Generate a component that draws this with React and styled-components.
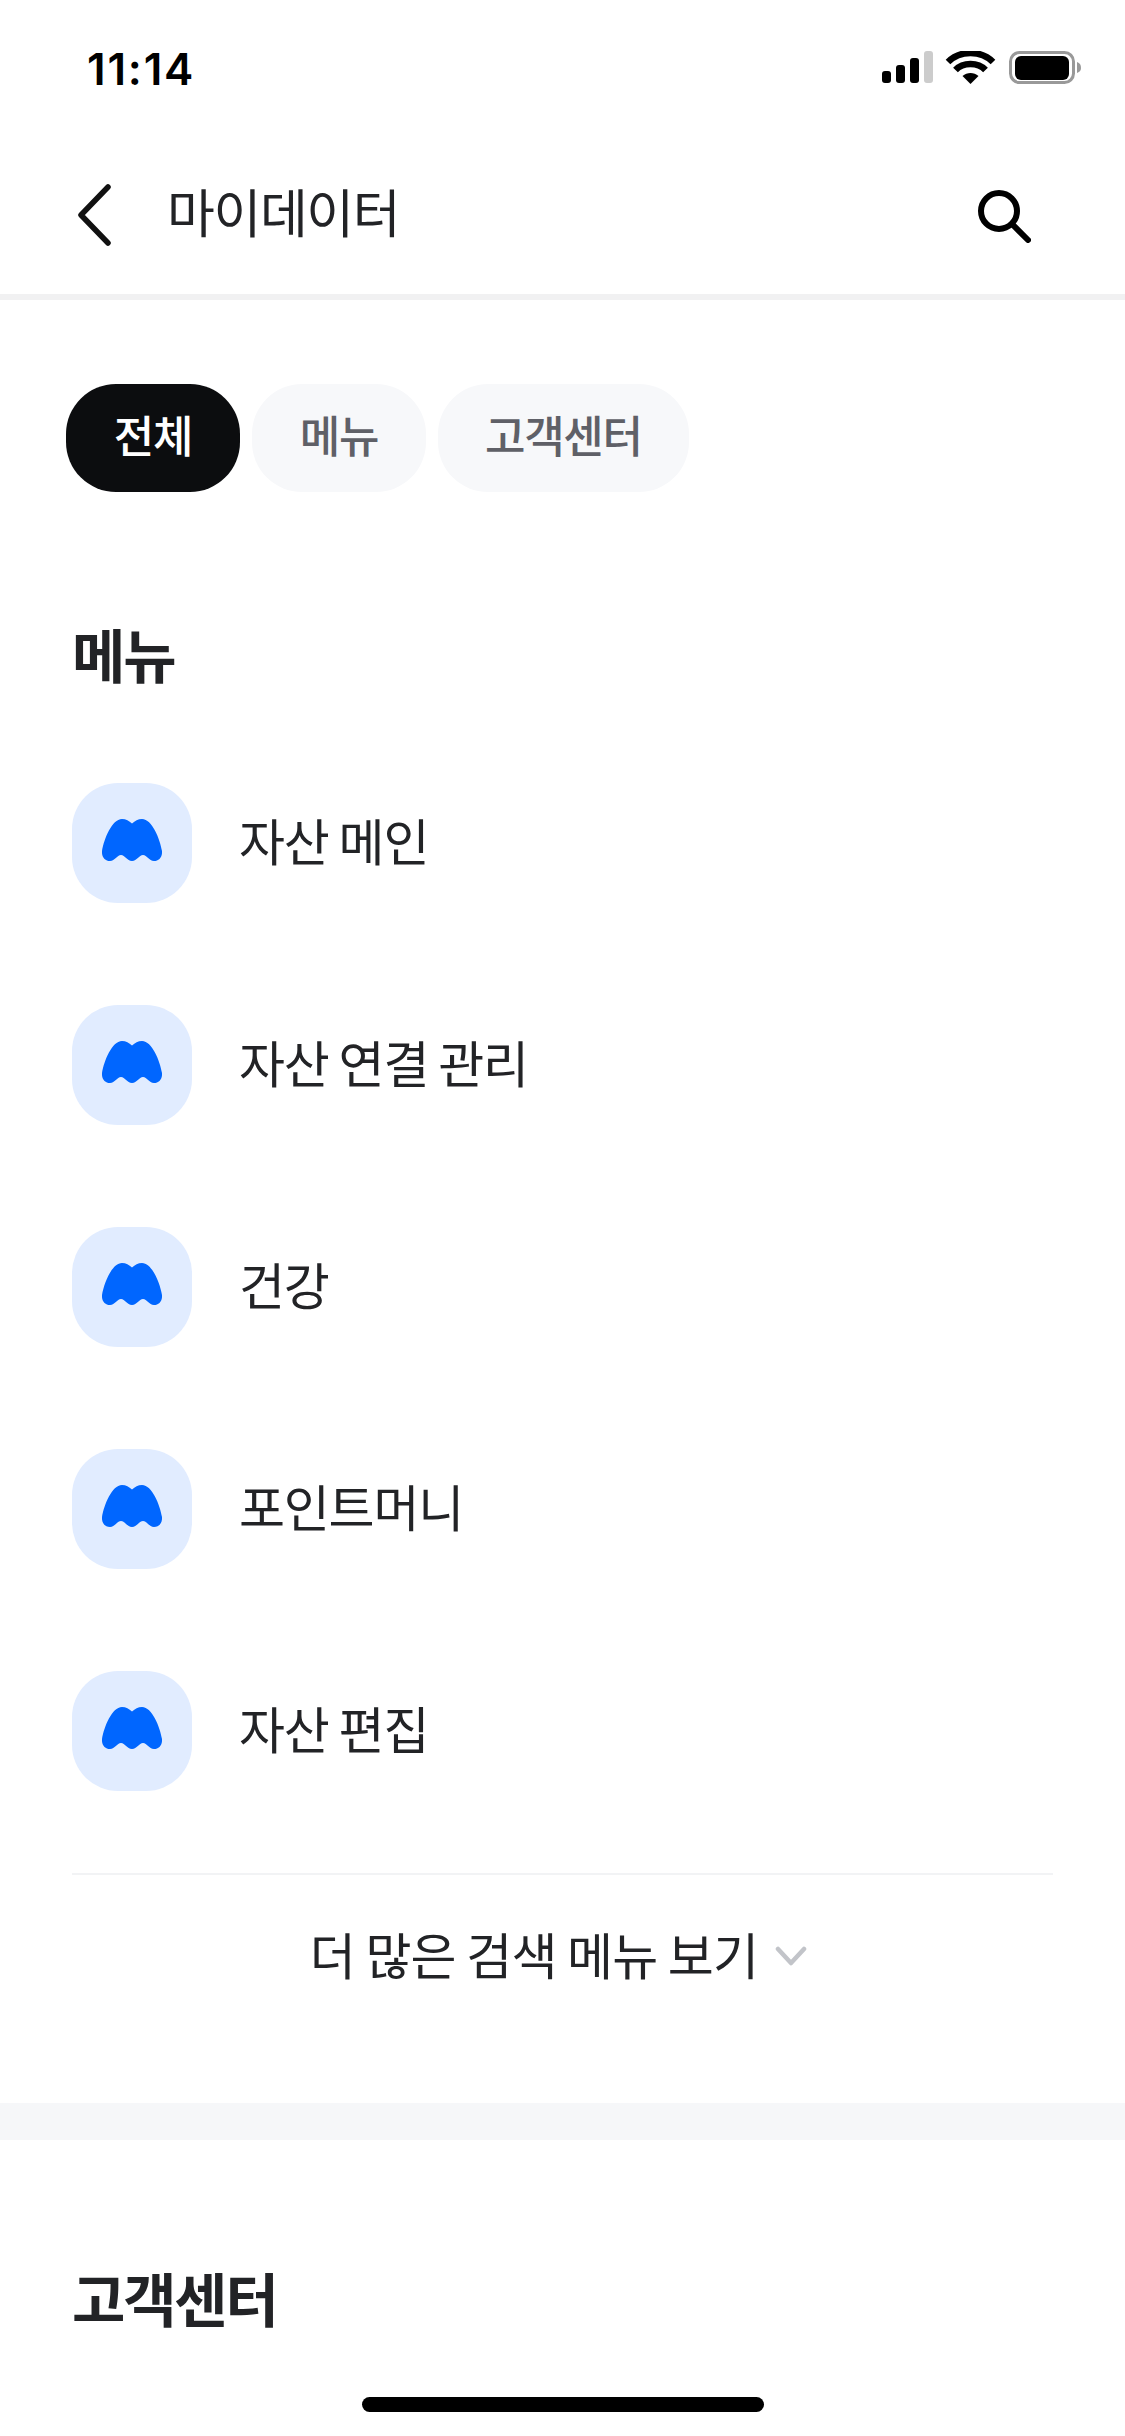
import styled, { createGlobalStyle } from 'styled-components';

const GlobalStyle = createGlobalStyle`
  html, body {
    margin: 0;
    padding: 0;
    background: #fff;
  }
  * {
    box-sizing: border-box;
  }
`;

const Page = styled.div`
  position: relative;
  width: 1125px;
  height: 2436px;
  overflow: hidden;
  background: #fff;
  font-family: "Noto Sans CJK KR", "Noto Sans", sans-serif;
  color: #222326;
`;

const StatusBar = styled.div`
  height: 132px;
  padding: 45px 43px 0 87px;
  display: flex;
  justify-content: space-between;
  align-items: flex-start;
`;

const Clock = styled.span`
  font-family: Inter, sans-serif;
  font-weight: 600;
  font-size: 44px;
  line-height: 48px;
  letter-spacing: 1.8px;
  color: #000;
`;

const StatusIcons = styled.svg`
  display: block;
  margin-top: 6px;
`;

const NavBar = styled.header`
  height: 168px;
  padding: 3px 94px 0 75px;
  display: flex;
  align-items: center;
  border-bottom: 6px solid #f1f1f2;
`;

const NavTitle = styled.h1`
  flex: 1;
  margin: 0 0 7px 56px;
  font-size: 52px;
  font-weight: 400;
  line-height: 70px;
  letter-spacing: -1.4px;
  color: #222326;
`;

const SearchIcon = styled.svg`
  margin-top: 3px;
`;

const Chips = styled.div`
  display: flex;
  gap: 12px;
  padding: 84px 66px 0;
`;

const Chip = styled.div`
  height: 108px;
  min-width: 174px;
  padding: 0 47px 8px;
  border-radius: 50px;
  display: flex;
  align-items: center;
  justify-content: center;
  font-size: 44px;
  font-weight: 500;
  letter-spacing: -1.3px;
  background: ${props => (props.$active ? '#0c0d0f' : '#f7f8fa')};
  color: ${props => (props.$active ? '#fff' : '#5f6067')};
`;

const SectionTitle = styled.h2`
  margin: 0 0 2px;
  padding-left: 72px;
  font-size: 58px;
  font-weight: 700;
  line-height: 74px;
  letter-spacing: -2.2px;
  color: #222326;
`;

const MenuSection = styled.section`
  padding-top: 124px;
`;

const MenuList = styled.ul`
  list-style: none;
  margin: 0;
  padding: 91px 72px 0;
  display: flex;
  flex-direction: column;
  gap: 102px;
`;

const MenuRow = styled.li`
  display: flex;
  align-items: center;
  gap: 47px;
  height: 120px;
`;

const IconTile = styled.div`
  width: 120px;
  height: 120px;
  padding-bottom: 6px;
  border-radius: 46px;
  background: #e1ecff;
  display: flex;
  align-items: center;
  justify-content: center;
`;

const MenuLabel = styled.span`
  margin-bottom: 8px;
  font-size: 50px;
  font-weight: 400;
  letter-spacing: -1.2px;
  color: #222326;
`;

const MoreButton = styled.div`
  margin: 82px 72px 0;
  height: 230px;
  padding: 0 8px 72px 0;
  border-top: 2px solid #f2f3f5;
  display: flex;
  align-items: center;
  justify-content: center;
  gap: 17px;
  font-size: 50px;
  letter-spacing: -0.8px;
  color: #222326;
`;

const MoreChevron = styled.svg`
  margin-top: 6px;
`;

const SectionGap = styled.div`
  height: 37px;
  background: #f6f7f9;
`;

const SupportSection = styled.section`
  padding-top: 120px;
`;

const HomeBar = styled.div`
  position: absolute;
  left: 362px;
  bottom: 24px;
  width: 402px;
  height: 15px;
  border-radius: 8px;
  background: #000;
`;

const menuItems = ['자산 메인', '자산 연결 관리', '건강', '포인트머니', '자산 편집'];

const BrandMark = () => (
  <svg width="60" height="42" viewBox="0 0 60 42">
    <path
      fill="#0066ff"
      d="M20 0C24 0 27 2 30 4.500C33 2 36 0 40 0C50 0 58 20 60 32C60.500 38 57 42 52 42C47 42 45 36 41 36C37 36 35 42 30 42C25 42 23 36 19 36C15 36 13 42 8 42C3 42-.5 38 0 32C2 20 10 0 20 0Z"
    />
  </svg>
);

const App = () => (
  <Page>
    <GlobalStyle />
    <StatusBar>
      <Clock>11:14</Clock>
      <StatusIcons width="200" height="36" viewBox="0 0 200 36">
        <rect x="0" y="20" width="9" height="12" rx="3" fill="#000" />
        <rect x="14" y="14" width="9" height="18" rx="3" fill="#000" />
        <rect x="28" y="7" width="9" height="25" rx="3" fill="#000" />
        <rect x="42" y="0" width="9" height="32" rx="3" fill="#ccc" />
        <path
          d="M66 11C78-1 99-1 111 11M73.500 19C81 11 96 11 103.500 19"
          fill="none"
          stroke="#000"
          strokeWidth="6.500"
          strokeLinecap="butt"
        />
        <path d="M80.500 25C85 21 92 21 96.500 25L88.500 33Z" fill="#000" />
        <rect x="128.500" y="1.500" width="63" height="30" rx="9" fill="none" stroke="#999" strokeWidth="3" />
        <rect x="133" y="5" width="54" height="24" rx="6" fill="#000" />
        <path d="M195 11C198 12 199 14 199 17C199 19 198 21 195 22Z" fill="#999" />
      </StatusIcons>
    </StatusBar>

    <NavBar>
      <svg width="36" height="62" viewBox="0 0 36 62">
        <path d="M33 3L6 31L33 59" fill="none" stroke="#111" strokeWidth="5.500" strokeLinecap="round" strokeLinejoin="round" />
      </svg>
      <NavTitle>마이데이터</NavTitle>
      <SearchIcon width="54" height="54" viewBox="0 0 54 54">
        <circle cx="22" cy="22" r="18" fill="none" stroke="#000" strokeWidth="6" />
        <path d="M35 35L51 51" fill="none" stroke="#000" strokeWidth="6" strokeLinecap="round" />
      </SearchIcon>
    </NavBar>

    <Chips>
      <Chip $active>전체</Chip>
      <Chip>메뉴</Chip>
      <Chip>고객센터</Chip>
    </Chips>

    <MenuSection>
      <SectionTitle>메뉴</SectionTitle>
      <MenuList>
        {menuItems.map(label => (
          <MenuRow key={label}>
            <IconTile>
              <BrandMark />
            </IconTile>
            <MenuLabel>{label}</MenuLabel>
          </MenuRow>
        ))}
      </MenuList>
      <MoreButton>
        더 많은 검색 메뉴 보기
        <MoreChevron width="32" height="20" viewBox="0 0 32 20">
          <path d="M3 3L16 17L29 3" fill="none" stroke="#c2c4c9" strokeWidth="4.500" strokeLinecap="round" strokeLinejoin="round" />
        </MoreChevron>
      </MoreButton>
    </MenuSection>

    <SectionGap />

    <SupportSection>
      <SectionTitle>고객센터</SectionTitle>
    </SupportSection>

    <HomeBar />
  </Page>
);

export default App;
